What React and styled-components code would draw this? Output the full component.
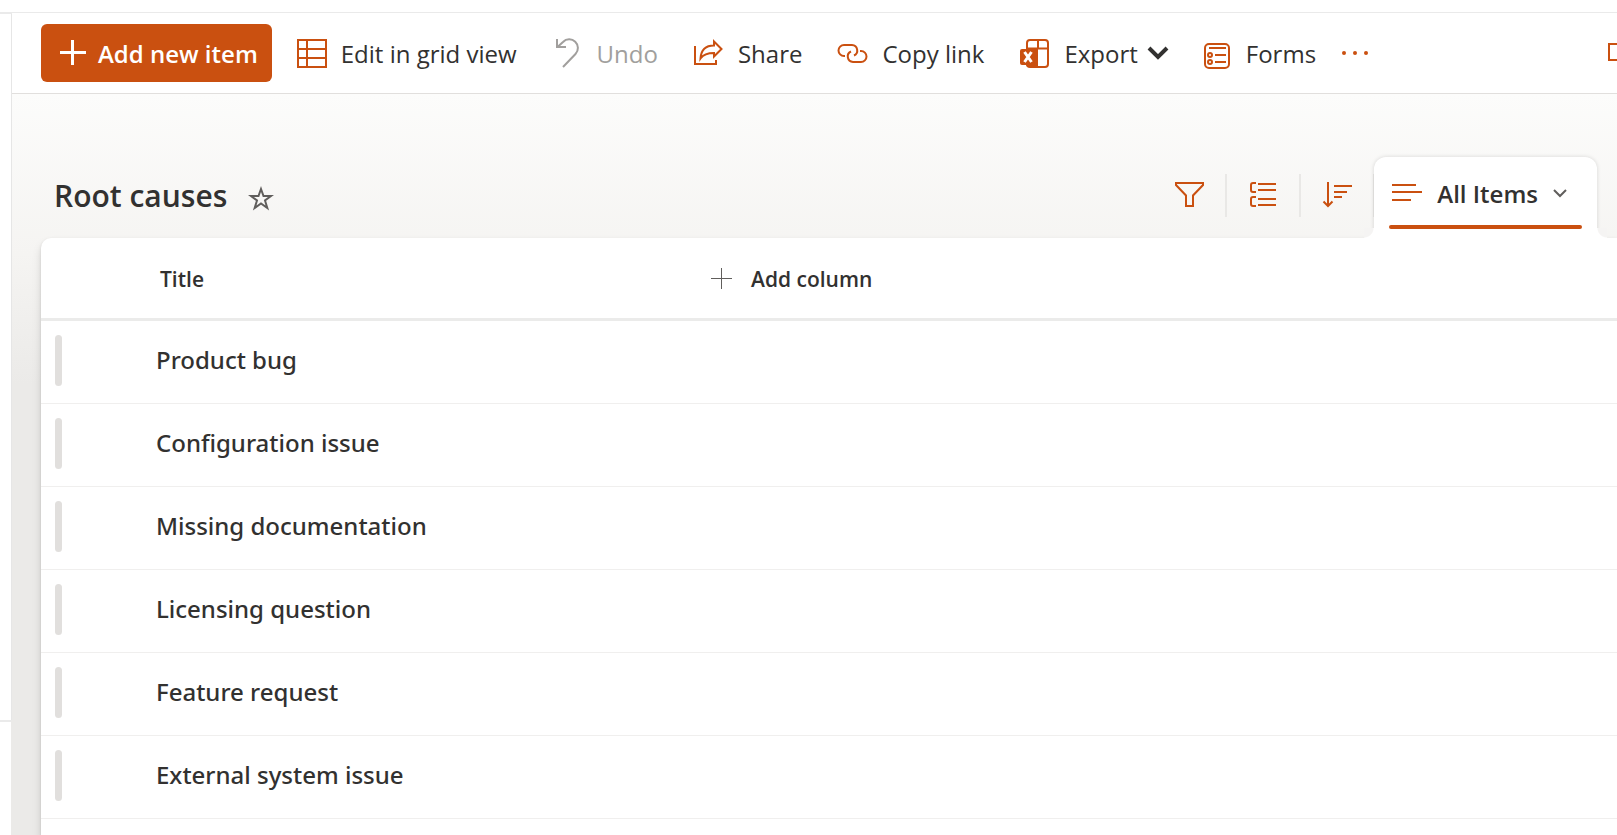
import styled, { createGlobalStyle } from 'styled-components'

const accent = '#ca5010'
const ink = '#323130'

const GlobalStyle = createGlobalStyle`
  * {
    box-sizing: border-box;
  }

  body {
    margin: 0;
    background: #fff;
    color: ${ink};
    font-family: "Open Sans", "Noto Sans", sans-serif;
    font-size: 24px;
    line-height: 32px;
  }

  button {
    font: inherit;
    color: inherit;
    background: none;
    border: 0;
    padding: 0;
    cursor: pointer;
  }
`

const Shell = styled.div`
  display: flex;
  min-height: 100vh;
  overflow: hidden;
`

const Rail = styled.aside`
  display: flex;
  flex-direction: column;
  flex: 0 0 12px;
`

const RailTop = styled.div`
  height: 14px;
  border-bottom: 2px solid #eaeaea;
`

const RailBody = styled.div`
  flex: 1;
  border-right: 1px solid #e6e6e6;
`

const RailFoot = styled.div`
  height: 115px;
  border-top: 2px solid #eaeaea;
  border-right: 1px solid #ebeae8;
`

const Content = styled.div`
  display: flex;
  flex-direction: column;
  flex: 1;
  min-width: 0;
`

const TopStrip = styled.div`
  height: 13px;
  border-bottom: 1px solid #eaeaea;
`

const Icon = styled.svg.attrs((p) => ({
  width: p.$size || 32,
  height: p.$size || 32,
  viewBox: `0 0 ${p.$size || 32} ${p.$size || 32}`,
  'aria-hidden': true,
}))`
  flex: none;
  fill: none;
  stroke: ${(p) => p.$color || accent};
  stroke-width: ${(p) => p.$stroke || 2};
`

const CommandBar = styled.header`
  display: flex;
  align-items: center;
  gap: 35px;
  height: 81px;
  padding-left: 29px;
  border-bottom: 1px solid #e1dfdd;
  overflow: hidden;
`

const NewButton = styled.button`
  display: flex;
  align-items: center;
  gap: 10px;
  height: 58px;
  padding: 2px 14px 0 15px;
  margin-right: -11px;
  border-radius: 6px;
  background: ${accent};
  color: #fff;
  font-weight: 600;
  white-space: nowrap;

  ${Icon} {
    margin-bottom: 3px;
  }
`

const Command = styled.button`
  display: flex;
  align-items: center;
  gap: 13px;
  padding-top: 2px;
  white-space: nowrap;

  &:disabled {
    color: #a19f9d;
    cursor: default;
  }

  ${Icon} {
    margin-bottom: 2px;
  }
`

const OverflowButton = styled(Command)`
  margin-left: -12px;
`

const Caret = styled(Icon)`
  margin: 0 -3px 0 -4px;
`

const PanelToggle = styled.button`
  display: flex;
  margin-left: auto;
  margin-right: -23px;
`

const Page = styled.main`
  display: flex;
  flex-direction: column;
  flex: 1;
  padding: 63px 0 0 29px;
  background: linear-gradient(#fcfcfb 0, #f5f4f2 160px, #ebeae8 290px);
`

const ListHead = styled.div`
  display: flex;
  align-items: center;
  height: 81px;
  padding-left: 13px;
`

const Heading = styled.h1`
  margin: 0 20px 4px 0;
  font-size: 30px;
  line-height: 40px;
  font-weight: 600;
`

const StarButton = styled.button`
  display: flex;
`

const ViewActions = styled.div`
  display: flex;
  align-items: center;
  height: 81px;
  margin-left: auto;
  margin-right: 20px;
`

const ViewButton = styled.button`
  display: flex;
  align-items: center;
  justify-content: center;
  width: 74px;
  height: 43px;
  padding-bottom: 2px;
  margin-bottom: 5px;
  border-right: 2px solid #e9e8e6;
`

const ViewTab = styled.div`
  position: relative;
  z-index: 1;
  height: 81px;
  padding: 0 15px;
  margin-left: -1px;
  border-radius: 12px 12px 0 0;
  background: #fff;
  box-shadow: 0 0 4px rgba(0, 0, 0, 0.14);
  clip-path: inset(-6px -10px 0 -10px);

  &::before,
  &::after {
    content: "";
    position: absolute;
    bottom: 0;
    width: 10px;
    height: 10px;
  }

  &::before {
    right: 100%;
    background: radial-gradient(circle at 0 0, #f5f4f3 9px, #fff 10px);
  }

  &::after {
    left: 100%;
    background: radial-gradient(circle at 100% 0, #f5f4f3 9px, #fff 10px);
  }
`

const ViewSelect = styled.button`
  display: flex;
  align-items: center;
  height: 68px;
  padding: 5px 14px 0 2px;
  gap: 14px;
  font-weight: 600;
  white-space: nowrap;

  ${Icon} {
    margin-bottom: 3px;
  }
`

const TabLine = styled.div`
  height: 4px;
  border-radius: 2px;
  background: ${accent};
`

const Card = styled.section`
  flex: 1;
  border-top-left-radius: 10px;
  background: #fff;
  box-shadow: 0 6px 10px rgba(0, 0, 0, 0.13), 0 1px 3px rgba(0, 0, 0, 0.11);
`

const Table = styled.table`
  width: 100%;
  border-spacing: 0;
  table-layout: fixed;
  text-align: left;
`

const HeadCell = styled.th`
  width: ${(p) => p.$width};
  height: 83px;
  padding: 2px 0 0 ${(p) => p.$indent || 0}px;
  border-bottom: 3px solid #ebebea;
  font-size: 21px;
  font-weight: 600;
`

const AddColumn = styled.button`
  display: flex;
  align-items: center;
  gap: 18px;
  font-weight: 600;
`

const Cell = styled.td`
  height: 83px;
  padding: 0 0 4px;
  border-bottom: 1px solid #f0efee;
  font-family: "Noto Sans", sans-serif;
  font-weight: 500;
`

const RowHandle = styled.div`
  width: 7px;
  height: 51px;
  margin-left: 14px;
  border-radius: 4px;
  background: #e1dfdd;
`

const causes = [
  'Product bug',
  'Configuration issue',
  'Missing documentation',
  'Licensing question',
  'Feature request',
  'External system issue',
]

const Toolbar = () => (
  <CommandBar>
    <NewButton type="button">
      <Icon $color="#fff" $stroke={3}><path d="M4 15.500h26M16.500 3v25" /></Icon>
      Add new item
    </NewButton>
    <Command type="button">
      <Icon><path d="M2 3h28v27H2zM2 12h28M2 21h28M11 3v27" /></Icon>
      Edit in grid view
    </Command>
    <Command type="button" disabled>
      <Icon $color="#a19f9d"><path d="M5 2v8h9M5.500 10L11 5a8.600 8.600 0 0 1 12.500 12L11 30" /></Icon>
      Undo
    </Command>
    <Command type="button">
      <Icon>
        <path d="M2 9v18h21v-4" />
        <path d="M21 4.500l7.500 7.500l-7.500 7.500V16C14 16 10 18 7.500 21.500C8 13 13 8.500 21 8.500z" />
      </Icon>
      Share
    </Command>
    <Command type="button">
      <Icon><path d="M8 19H7a5.500 5.500 0 0 1 0-11h8a5.500 5.500 0 0 1 2 10.500M23 14h1a5.500 5.500 0 0 1 0 11h-8a5.500 5.500 0 0 1-2-10.500" /></Icon>
      Copy link
    </Command>
    <Command type="button">
      <Icon>
        <rect x="8" y="3" width="21" height="27" rx="3" />
        <path d="M8 11.500h21M19 3v8" />
        <path d="M7 12h12v18h-9q-3 0-3-3z" fill={accent} stroke="none" />
        <rect x="1" y="12" width="16" height="16" rx="2" fill={accent} stroke="none" />
        <path d="M5.500 15l7 10M12.500 15l-7 10" stroke="#fff" strokeWidth="3" />
      </Icon>
      Export
      <Caret $size={22} $color={ink} $stroke={4}><path d="M2 6l9 9l9-9" /></Caret>
    </Command>
    <Command type="button">
      <Icon>
        <rect x="4" y="7" width="24" height="24" rx="4" />
        <path d="M8 11h17M14 18h11M14 25h11" />
        <circle cx="9" cy="18" r="2" />
        <circle cx="9" cy="25" r="2" />
      </Icon>
      Forms
    </Command>
    <OverflowButton type="button" aria-label="More">
      <Icon>
        <g fill={accent} stroke="none">
          <circle cx="5" cy="16" r="2" />
          <circle cx="16" cy="16" r="2" />
          <circle cx="27" cy="16" r="2" />
        </g>
      </Icon>
    </OverflowButton>
    <PanelToggle type="button" aria-label="Open details">
      <Icon><path d="M1 7h28v16H1z" /></Icon>
    </PanelToggle>
  </CommandBar>
)

const ListHeader = () => (
  <ListHead>
    <Heading>Root causes</Heading>
    <StarButton type="button" aria-label="Favorite">
      <Icon $size={28} $color="#605e5c">
        <path d="M14 5l2.500 7h7.500l-6 4.500l2.300 7.500l-6.300-4.500l-6.300 4.500l2.300-7.500l-6-4.500h7.500z" />
      </Icon>
    </StarButton>
    <ViewActions>
      <ViewButton type="button" aria-label="Filter">
        <Icon><path d="M3 5h27v2L20 17.500V28h-7V17.500L3 7z" /></Icon>
      </ViewButton>
      <ViewButton type="button" aria-label="Group">
        <Icon>
          <path d="M9 5H6q-2 0-2 2v5q0 2 2 2h3M9 19H6q-2 0-2 2v5q0 2 2 2h3" />
          <path d="M11 6h18M11 12h18M11 21h18M11 27h18" />
        </Icon>
      </ViewButton>
      <ViewButton type="button" aria-label="Sort">
        <Icon><path d="M7 4v24M2.500 23.500l4.500 4.500l4.500-4.500M13 8h18M13 14h13M13 19h8" /></Icon>
      </ViewButton>
      <ViewTab>
        <ViewSelect type="button">
          <Icon><path d="M1 9h24M1 16h30M1 24h19" /></Icon>
          All Items
          <Icon $size={16} $color="#605e5c"><path d="M2 6l6 6l6-6" /></Icon>
        </ViewSelect>
        <TabLine />
      </ViewTab>
    </ViewActions>
  </ListHead>
)

const CauseTable = () => (
  <Card>
    <Table>
      <thead>
        <tr>
          <HeadCell $width="115px" aria-label="Selection" />
          <HeadCell $width="555px" $indent={4}>Title</HeadCell>
          <HeadCell>
            <AddColumn type="button">
              <Icon $size={22} $color="#605e5c" $stroke={1}><path d="M0 10.500h21M10.500 0v21" /></Icon>
              Add column
            </AddColumn>
          </HeadCell>
        </tr>
      </thead>
      <tbody>
        {causes.map((cause) => (
          <tr key={cause}>
            <Cell><RowHandle /></Cell>
            <Cell>{cause}</Cell>
            <Cell />
          </tr>
        ))}
      </tbody>
    </Table>
  </Card>
)

const App = () => {
  return (
    <Shell>
      <GlobalStyle />
      <Rail>
        <RailTop />
        <RailBody />
        <RailFoot />
      </Rail>
      <Content>
        <TopStrip />
        <Toolbar />
        <Page>
          <ListHeader />
          <CauseTable />
        </Page>
      </Content>
    </Shell>
  )
}

export default App
